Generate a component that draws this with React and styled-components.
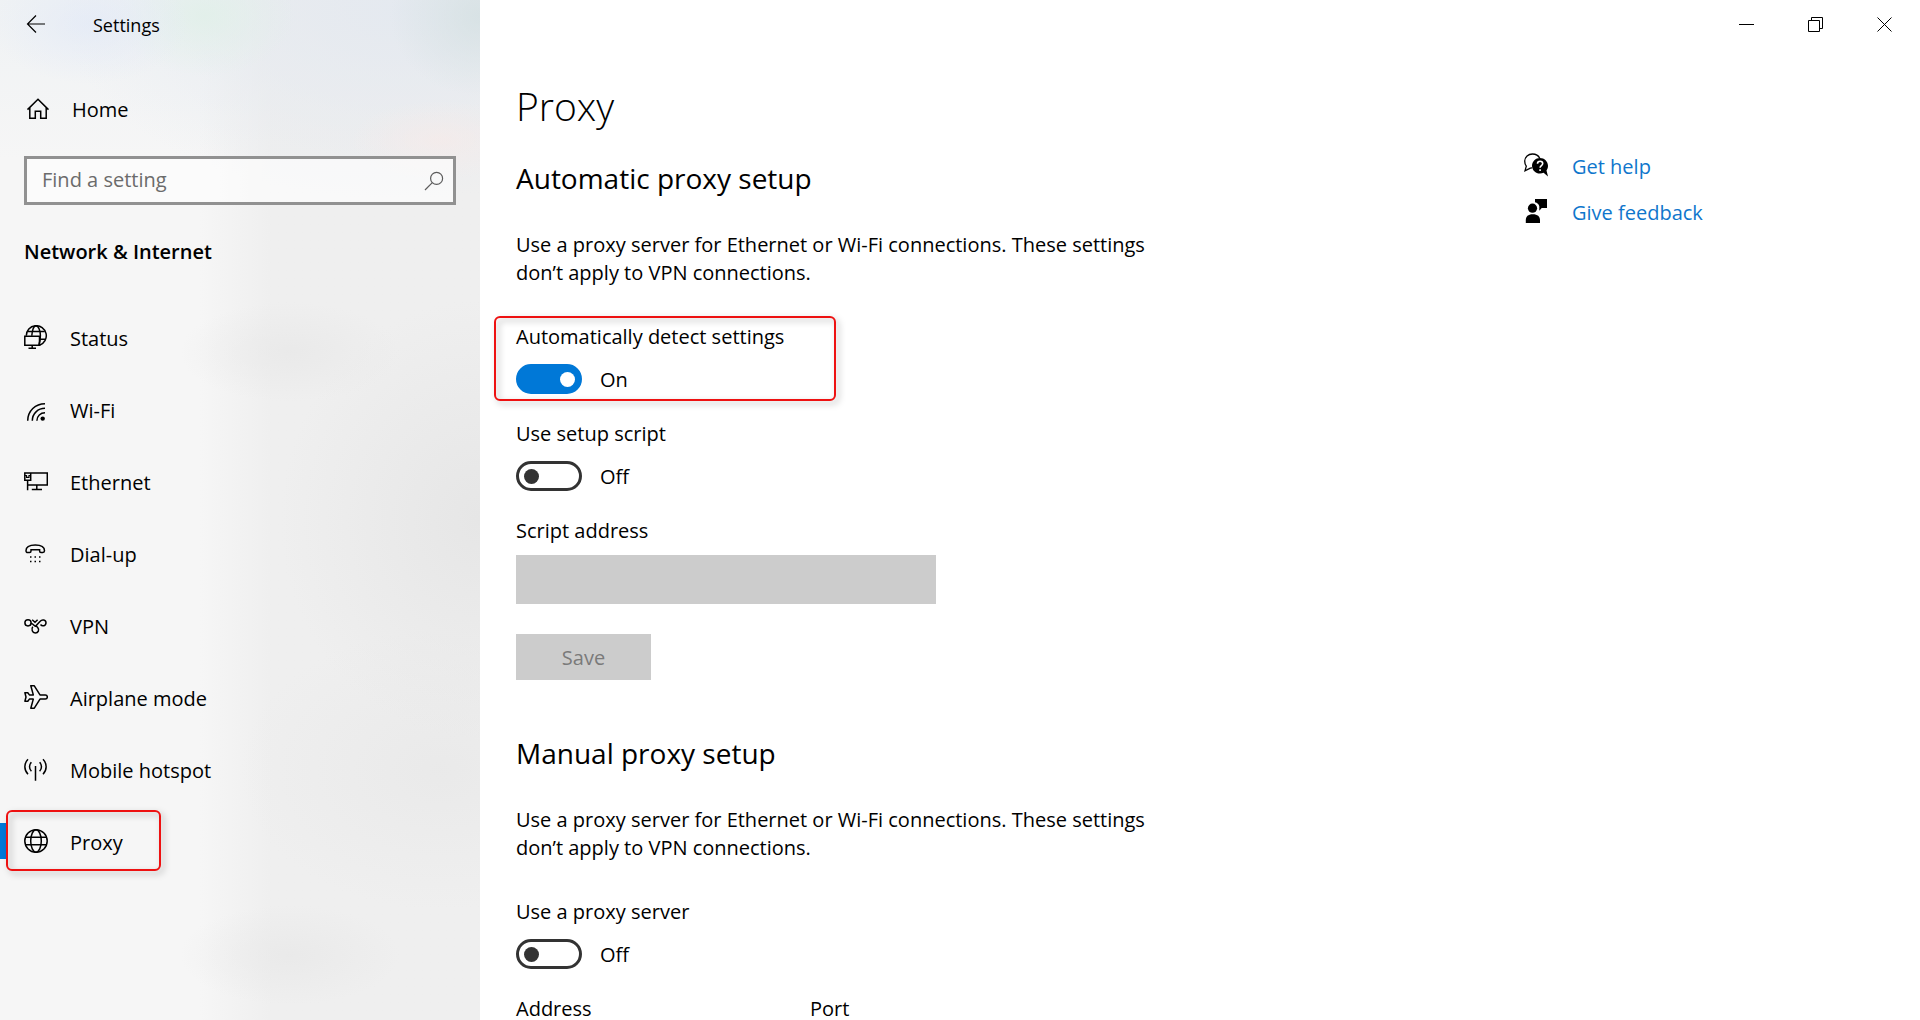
import React, { useState } from 'react';

import styled, { createGlobalStyle, css } from 'styled-components';

const ACCENT = '#0078d7';
const LINK = '#0f76cc';
const INK = '#000000';

const GlobalStyle = createGlobalStyle`
  * {
    box-sizing: border-box;
  }

  body {
    margin: 0;
    color: ${INK};
    background: #ffffff;
    font-family: 'Open Sans', 'Noto Sans', sans-serif;
    font-size: 20px;
    line-height: 28px;
  }

  button,
  input {
    font: inherit;
    color: inherit;
  }
`;

const Window = styled.div`
  display: grid;
  grid-template-columns: 480px 1fr;
  height: 100vh;
  overflow: hidden;
`;

/* sidebar */

const Sidebar = styled.aside`
  display: flex;
  flex-direction: column;
  background:
    radial-gradient(ellipse 90px 80px at 480px 16px, rgba(212, 224, 226, 0.8), transparent),
    radial-gradient(ellipse 100px 60px at 90px 24px, rgba(226, 233, 247, 0.7), transparent),
    radial-gradient(ellipse 90px 60px at 205px 16px, rgba(224, 240, 232, 0.8), transparent),
    radial-gradient(ellipse 90px 40px at 440px 140px, rgba(248, 234, 232, 0.6), transparent),
    radial-gradient(ellipse 340px 190px at 400px 10px, rgba(228, 233, 240, 0.95), transparent),
    radial-gradient(ellipse 110px 50px at 290px 352px, rgba(230, 230, 230, 0.6), transparent),
    radial-gradient(ellipse 200px 220px at 480px 520px, rgba(226, 226, 226, 0.7), transparent),
    radial-gradient(ellipse 200px 140px at 440px 770px, rgba(230, 230, 230, 0.6), transparent),
    radial-gradient(ellipse 110px 50px at 290px 955px, rgba(230, 230, 230, 0.6), transparent),
    linear-gradient(90deg, transparent 200px, rgba(236, 236, 236, 0.7) 270px),
    linear-gradient(#eff2f4, #f6f6f6 160px);
`;

const SidebarBar = styled.header`
  display: flex;
  align-items: center;
  gap: 35px;
  height: 50px;
  padding-left: 14px;
  font-size: 18px;
`;

const IconButton = styled.button`
  display: flex;
  align-items: center;
  justify-content: center;
  width: ${({ $width }) => $width}px;
  height: 48px;
  padding: 0;
  border: 0;
  background: none;
`;

const HomeLink = styled.a`
  display: flex;
  align-items: center;
  gap: 23px;
  margin-top: 46px;
  padding-left: 25px;
  color: inherit;
  text-decoration: none;

  svg {
    margin-bottom: 2px;
  }
`;

const SearchBox = styled.form`
  display: flex;
  align-items: center;
  height: 49px;
  margin: 32px 24px 0;
  padding: 0 9px 0 15px;
  border: 3px solid #919191;
  background: rgba(255, 255, 255, 0.6);
`;

const SearchInput = styled.input`
  flex: 1;
  min-width: 0;
  padding: 0 0 2px;
  border: 0;
  outline: 0;
  background: none;

  &::placeholder {
    color: #6b6b6b;
    opacity: 1;
  }
`;

const SidebarTitle = styled.h2`
  margin: 33px 24px 0;
  font-size: 20px;
  font-weight: 600;
`;

const NavList = styled.ul`
  margin: 37px 0 0;
  padding: 0;
  list-style: none;
`;

const NavItem = styled.li`
  position: relative;
`;

const NavLink = styled.a`
  display: flex;
  align-items: center;
  height: 72px;
  color: inherit;
  text-decoration: none;

  &::before {
    content: '';
    width: 6px;
    height: 36px;
    margin: 0 18px 4px 0;
    background: ${({ $active }) => ($active ? ACCENT : 'transparent')};
  }

  svg {
    margin: 0 22px 4px 0;
  }
`;

/* red frame drawn over a control */
const Marker = styled.span`
  position: absolute;
  border: 2px solid #ee1111;
  border-radius: 6px;
  filter: drop-shadow(3px 3px 3px rgba(0, 0, 0, 0.3));
  pointer-events: none;
  ${({ $nav }) => ($nav ? css`
    top: 3px;
    left: 6px;
    width: 155px;
    height: 61px;
  ` : css`
    top: -7px;
    left: -22px;
    width: 342px;
    height: 85px;
  `)}
`;

/* main pane */

const Pane = styled.div`
  display: flex;
  flex-direction: column;
  min-width: 0;
  height: 100vh;
`;

const PaneBar = styled.header`
  display: flex;
  justify-content: flex-end;
  flex: none;
  height: 50px;
  padding-right: 1px;
`;

const Scroller = styled.div`
  display: flex;
  justify-content: space-between;
  flex: 1;
  min-height: 0;
  padding-left: 36px;
  overflow-y: auto;
  scrollbar-width: none;
`;

const Content = styled.main`
  max-width: 640px;
`;

const PageTitle = styled.h1`
  margin: 28px 0 26px;
  font-size: 39px;
  font-weight: 300;
  line-height: 56px;
`;

const Section = styled.section`
  padding-bottom: 55px;
`;

const SectionTitle = styled.h2`
  margin: 0 0 35px;
  font-size: 28px;
  font-weight: 400;
  line-height: 36px;
`;

const Description = styled.p`
  margin: 0 0 36px;
`;

const Setting = styled.div`
  position: relative;
  margin-bottom: 26px;
`;

const SettingLabel = styled.label`
  display: block;
`;

const SwitchRow = styled.div`
  display: flex;
  align-items: center;
  gap: 18px;
  height: 30px;
  margin-top: 13px;
`;

const SwitchState = styled.span`
  padding-top: 2px;
`;

const Switch = styled.input`
  display: flex;
  align-items: center;
  width: 66px;
  height: 30px;
  margin: 0;
  padding: 0 4px 0 5px;
  appearance: none;
  border: 3px solid #333333;
  border-radius: 15px;

  &::before {
    content: '';
    width: 15px;
    height: 15px;
    border-radius: 50%;
    background: #333333;
  }

  &:checked {
    justify-content: flex-end;
    border-color: ${ACCENT};
    background: ${ACCENT};
  }

  &:checked::before {
    background: #ffffff;
  }
`;

const TextBox = styled.input`
  display: block;
  width: ${({ $width }) => $width}px;
  height: 49px;
  margin-top: 10px;
  padding: 0 12px;
  border: 0;
  background: #cccccc;
`;

const SaveButton = styled.button`
  width: 135px;
  height: 46px;
  margin-top: 4px;
  padding: 2px 0 0;
  border: 0;
  background: #cccccc;
  color: #7a7a7a;
`;

const FieldRow = styled.div`
  display: flex;
  gap: 24px;
`;

const HelpLinks = styled.nav`
  display: flex;
  flex-direction: column;
  gap: 18px;
  width: 396px;
  padding-top: 103px;
`;

const HelpLink = styled.a`
  display: flex;
  align-items: center;
  gap: 24px;
  color: ${LINK};
  text-decoration: none;

  svg {
    margin-bottom: 4px;
    color: ${INK};
  }
`;

const Icon = ({ size = 24, stroke = 1.5, children }) => (
  <svg
      aria-hidden="true"
      fill="none"
      height={size}
      stroke="currentColor"
      strokeWidth={stroke}
      viewBox={`0 0 ${size} ${size}`}
      width={size}>
    {children}
  </svg>
);

const BackIcon = () => (
  <Icon size={20} stroke={1.2}>
    <path d="M19 9H1.5M10 .5L1.5 9L10 17.5" />
  </Icon>
);

const HomeIcon = () => (
  <Icon>
    <path d="M2.5 12.6L13 2.2L23.5 12.6M4.8 10.8V21.2H10.3V14.2H15.7V21.2H21.2V10.8" />
  </Icon>
);

const SearchIcon = () => (
  <Icon size={20} stroke={1.2}>
    <g stroke="#5c5c5c">
      <circle cx="12.6" cy="7.4" r="6" />
      <path d="M8.3 11.7L1 19" />
    </g>
  </Icon>
);

const StatusIcon = () => (
  <Icon>
    <path d="M2.3 10.8A10 10 0 1 1 15.5 20.2" />
    <path d="M3.6 6.5H20.8M16 14.3H21.2M7.8 10.8C8.2 6 9.8 1 12 .8C14.6 1 16.4 6 16.4 10.5C16.4 14 15.8 17.5 14.8 20" />
    <path d="M.8 11.2H15.5V20.3H.8ZM8.2 20.3V23.3M4.5 23.3H12" />
  </Icon>
);

const WifiIcon = () => (
  <Icon>
    <path d="M3.7 23.7C3.7 14 11.5 6.7 21 6.7M8.3 23.7C8.3 16.6 14 11.3 21 11.3M12.9 23.7C12.9 19 16.5 15.8 21 15.8" />
    <circle cx="18.7" cy="21.6" fill="currentColor" r="2.2" stroke="none" />
  </Icon>
);

const EthernetIcon = () => (
  <Icon>
    <path d="M6.5 4H23.3V16H3.5M.8 4H6.7V11.3H.8ZM3.6 11.3V21.3M12.8 16V20.6M7.8 20.6H18" />
    <path d="M.8 6.5H2.5V8.3H5V6.5H6.7" strokeWidth="1.2" />
  </Icon>
);

const DialUpIcon = () => (
  <Icon>
    <path d="M2 9.8C2 5.8 5.5 4 11.3 4C17 4 20.5 5.8 20.5 9.8C20.5 11 19.8 11.5 18.8 11.5H17C16 11.5 15.6 11 15.6 10V8.8H7V10C7 11 6.6 11.5 5.6 11.5H3.8C2.7 11.5 2 11 2 9.8Z" />
    <path d="M6 15.9H7.5M10.5 15.9H12M15 15.9H16.5M6 20.4H7.5M10.5 20.4H12M15 20.4H16.5" />
  </Icon>
);

const VpnIcon = () => (
  <Icon>
    <circle cx="4" cy="9.8" r="3.1" />
    <path d="M7 10.5C9.5 10.3 9.8 13.6 12.2 13.6M8.2 6.8L11 9.2L13.6 6.8" />
    <path d="M8.8 13.8C7 16 8.3 20 11.3 20C14.3 20 15.7 16.8 13.7 14.4L12 12.7L16.2 8.2C18 6.1 22 6.6 22 9.8C22 13 18.2 13.8 16.5 11.5" />
  </Icon>
);

const AirplaneIcon = () => (
  <Icon>
    <path
        d="M6.8 .8H10.3L16 9.9H21.3C22.6 9.9 23.3 10.8 23.3 12C23.3 13.2 22.6 14.1 21.3 14.1H16L10.3 23.2H6.8L9.3 14.1H5.4L3.8 16.3H.9L2 12L.9 7.7H3.8L5.4 9.9H9.3Z"
        strokeLinejoin="round" />
  </Icon>
);

const HotspotIcon = () => (
  <Icon>
    <path d="M11.5 9V23.7M4 2.3C-.2 6.5 -.2 13 4 17.2M19 2.3C23.2 6.5 23.2 13 19 17.2M7.4 5.3C4.9 7.8 4.9 11.7 7.4 14.2M15.6 5.3C18.1 7.8 18.1 11.7 15.6 14.2" />
  </Icon>
);

const GlobeIcon = () => (
  <Icon>
    <circle cx="12" cy="12" r="11.2" />
    <ellipse cx="12" cy="12" rx="5.3" ry="11.2" />
    <path d="M1.7 8.2H22.3M1.7 15.8H22.3" />
  </Icon>
);

const HelpIcon = () => (
  <Icon>
    <path d="M8 14.9C6.8 14.9 5.8 15.2 4.8 15.9L1 17.8L2.3 13.2C1 11.5 .7 9.8 .7 8C.9 4 4.2 1 8.4 1C12 1 14.6 2.7 15.7 5.2" strokeWidth="1.3" />
    <path
        d="M16 5C11.6 5 8 8.5 8 12.8C8 17.2 11.6 20.6 16 20.6C17.4 20.6 18.6 20.3 19.6 19.8L24 23.6L22.5 17.4C23.5 16 24 14.5 24 12.8C24 8.5 20.4 5 16 5Z"
        fill="currentColor"
        stroke="none" />
    <path d="M13.5 10.8C13.5 9.2 14.6 8.3 16.1 8.3C17.7 8.3 18.7 9.2 18.7 10.6C18.7 12.6 16.1 12.6 16.1 14.8M16.1 16.3V18" stroke="#ffffff" strokeWidth="1.6" />
  </Icon>
);

const FeedbackIcon = () => (
  <Icon>
    <g fill="currentColor" stroke="none">
      <circle cx="8.5" cy="9.2" r="4.6" />
      <path d="M1.8 24V21.3C1.8 17.5 4 15.3 8.8 15.3C13.6 15.3 16 17.5 16 21.3V24Z" />
      <path d="M11 0H23V9H17.7L15.3 11.8V7.3C14.8 5 13.3 3.8 11 3.2Z" />
    </g>
  </Icon>
);

const MinimizeIcon = () => (
  <Icon size={15} stroke={1}>
    <path d="M0 7.5H15" />
  </Icon>
);

const RestoreIcon = () => (
  <Icon size={15} stroke={1}>
    <path d="M.5 3.5H11.5V14.5H.5ZM3.5 3.5V.5H14.5V11.5H11.5" />
  </Icon>
);

const CloseIcon = () => (
  <Icon size={15} stroke={1}>
    <path d="M.5 .5L14.5 14.5M14.5 .5L.5 14.5" />
  </Icon>
);

const NAV_ITEMS = [
  { title: 'Status', NavIcon: StatusIcon },
  { title: 'Wi-Fi', NavIcon: WifiIcon },
  { title: 'Ethernet', NavIcon: EthernetIcon },
  { title: 'Dial-up', NavIcon: DialUpIcon },
  { title: 'VPN', NavIcon: VpnIcon },
  { title: 'Airplane mode', NavIcon: AirplaneIcon },
  { title: 'Mobile hotspot', NavIcon: HotspotIcon },
  { title: 'Proxy', NavIcon: GlobeIcon, active: true },
];

const SwitchSetting = ({ id, initial = false, marked = false, title }) => {
  const [on, setOn] = useState(initial);

  return (
    <Setting>
      <SettingLabel htmlFor={id}>{title}</SettingLabel>
      <SwitchRow>
        <Switch
            checked={on}
            id={id}
            onChange={() => setOn(!on)}
            role="switch"
            type="checkbox" />
        <SwitchState>{on ? 'On' : 'Off'}</SwitchState>
      </SwitchRow>
      {marked && <Marker />}
    </Setting>
  );
};

const SettingsSidebar = () => (
  <Sidebar>
    <SidebarBar>
      <IconButton $width={44} aria-label="Back" type="button"><BackIcon /></IconButton>
      <span>Settings</span>
    </SidebarBar>
    <HomeLink href="#home">
      <HomeIcon />
      Home
    </HomeLink>
    <SearchBox onSubmit={(e) => e.preventDefault()} role="search">
      <SearchInput aria-label="Find a setting" placeholder="Find a setting" type="text" />
      <SearchIcon />
    </SearchBox>
    <SidebarTitle>Network &amp; Internet</SidebarTitle>
    <nav>
      <NavList>
        {NAV_ITEMS.map(({ title, NavIcon, active }) => (
          <NavItem key={title}>
            <NavLink $active={active} aria-current={active ? 'page' : undefined} href="#settings">
              <NavIcon />
              {title}
            </NavLink>
            {active && <Marker $nav />}
          </NavItem>
        ))}
      </NavList>
    </nav>
  </Sidebar>
);

const App = () => (
  <>
    <GlobalStyle />
    <Window>
      <SettingsSidebar />
      <Pane>
        <PaneBar>
          <IconButton $width={69} aria-label="Minimize" type="button"><MinimizeIcon /></IconButton>
          <IconButton $width={69} aria-label="Restore" type="button"><RestoreIcon /></IconButton>
          <IconButton $width={69} aria-label="Close" type="button"><CloseIcon /></IconButton>
        </PaneBar>
        <Scroller>
          <Content>
            <PageTitle>Proxy</PageTitle>

            <Section>
              <SectionTitle>Automatic proxy setup</SectionTitle>
              <Description>
                Use a proxy server for Ethernet or Wi-Fi connections. These settings
                don’t apply to VPN connections.
              </Description>
              <SwitchSetting id="auto-detect" initial marked title="Automatically detect settings" />
              <SwitchSetting id="setup-script" title="Use setup script" />
              <Setting>
                <SettingLabel htmlFor="script-address">Script address</SettingLabel>
                <TextBox $width={420} disabled id="script-address" type="text" />
              </Setting>
              <SaveButton disabled type="button">Save</SaveButton>
            </Section>

            <Section>
              <SectionTitle>Manual proxy setup</SectionTitle>
              <Description>
                Use a proxy server for Ethernet or Wi-Fi connections. These settings
                don’t apply to VPN connections.
              </Description>
              <SwitchSetting id="proxy-server" title="Use a proxy server" />
              <FieldRow>
                <Setting>
                  <SettingLabel htmlFor="address">Address</SettingLabel>
                  <TextBox $width={270} disabled id="address" type="text" />
                </Setting>
                <Setting>
                  <SettingLabel htmlFor="port">Port</SettingLabel>
                  <TextBox $width={126} disabled id="port" type="text" />
                </Setting>
              </FieldRow>
            </Section>
          </Content>
          <HelpLinks>
            <HelpLink href="#help">
              <HelpIcon />
              Get help
            </HelpLink>
            <HelpLink href="#feedback">
              <FeedbackIcon />
              Give feedback
            </HelpLink>
          </HelpLinks>
        </Scroller>
      </Pane>
    </Window>
  </>
);

export default App;
